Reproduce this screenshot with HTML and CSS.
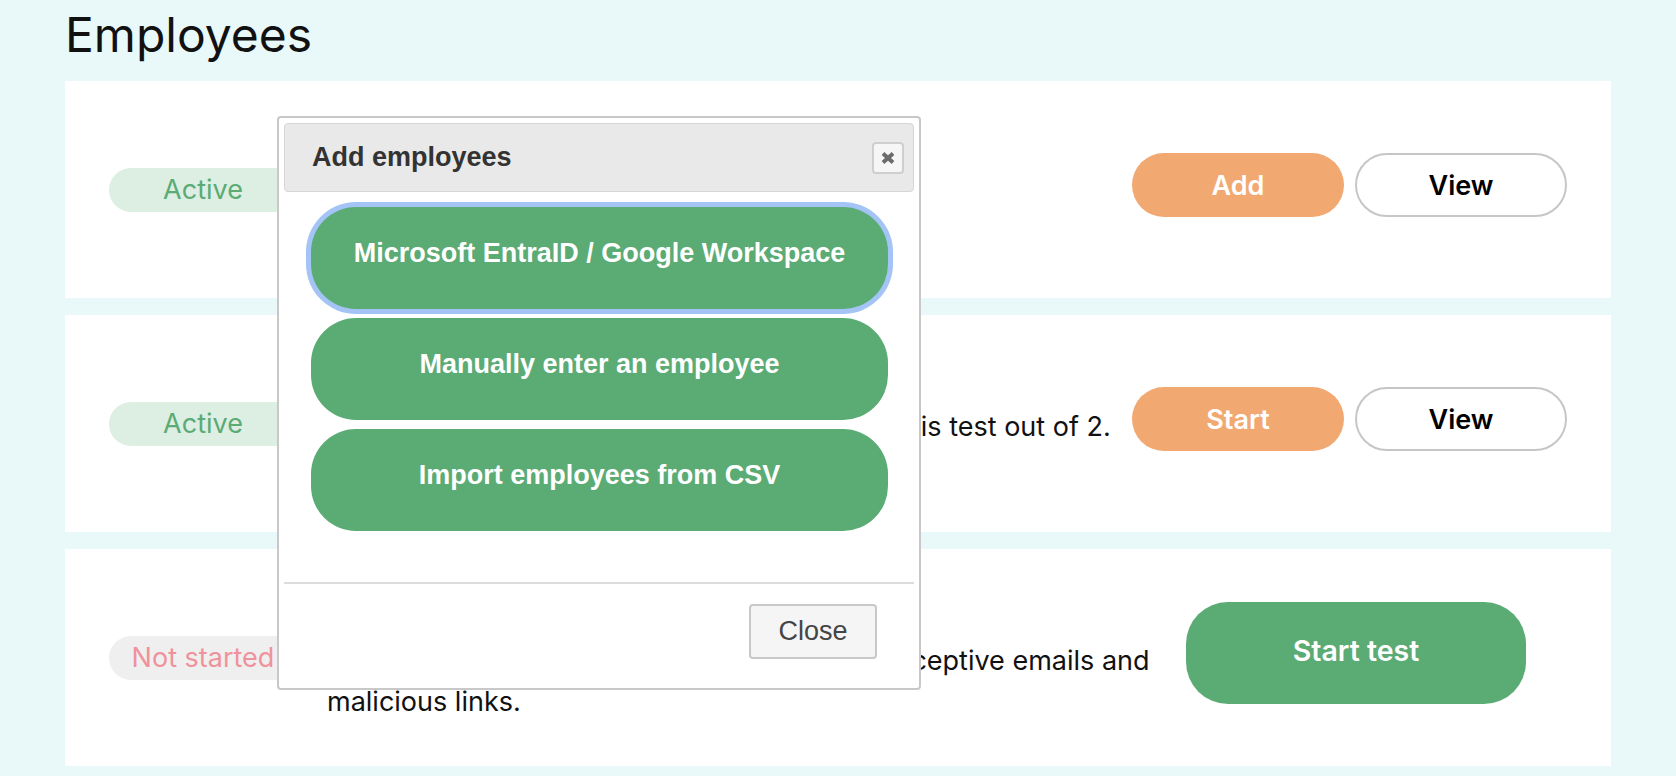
FILE: index.html
```html
<!DOCTYPE html>
<html lang="en">
<head>
  <meta charset="UTF-8" />
  <meta name="viewport" content="width=device-width, initial-scale=1.0"/>
  <title>Employees</title>
  <link rel="stylesheet" href="styles.css">
</head>
<body>
  <div class="page">
    <h1>Employees</h1>

    <div class="panel">
      <span class="badge badge-active">Active</span>
      <div class="panel-body">
        <div class="panel-title">Employees</div>
        <p>2 employees in your team.</p>
      </div>
      <div class="actions">
        <button class="btn btn-orange">Add</button>
        <button class="btn btn-outline">View</button>
      </div>
    </div>

    <div class="panel">
      <span class="badge badge-active">Active</span>
      <div class="panel-body">
        <div class="panel-title">Security training</div>
        <p>To date, 1 of your employees has completed this test out of 2. Results update daily.</p>
      </div>
      <div class="actions">
        <button class="btn btn-orange">Start</button>
        <button class="btn btn-outline">View</button>
      </div>
    </div>

    <div class="panel">
      <span class="badge badge-waiting">Not started</span>
      <div class="panel-body">
        <div class="panel-title">Phishing test</div>
        <p>Check how well your employees can catch deceptive emails and malicious links.</p>
      </div>
      <div class="actions actions-single">
        <button class="btn-big">Start test</button>
      </div>
    </div>

    <!-- Add employees dialog -->
    <div class="dialog">
      <div class="dialog-header">
        <span>Add employees</span>
        <button class="dialog-x" title="Close">
          <svg width="16" height="14" viewBox="0 0 16 14">
            <path d="M3 2.5 L13 11.5 M13 2.5 L3 11.5" stroke="#6b6b6b" stroke-width="4"/>
          </svg>
        </button>
      </div>
      <div class="dialog-body">
        <button class="dialog-option focused">Microsoft EntraID / Google Workspace</button>
        <button class="dialog-option">Manually enter an employee</button>
        <button class="dialog-option">Import employees from CSV</button>
      </div>
      <div class="dialog-footer">
        <button class="dialog-close">Close</button>
      </div>
    </div>
  </div>
</body>
</html>
```

FILE: styles.css
```css
body {
  margin: 0;
  font-family: Inter, "Liberation Sans", sans-serif;
  background-color: #e9f8f9;
  color: #111;
}

.page {
  position: relative;
  padding: 6px 65px 0;
}

h1 {
  margin: 0 0 17px;
  font-size: 48px;
  font-weight: 400;
  line-height: 58px;
}

.panel {
  display: flex;
  align-items: center;
  height: 217px;
  padding: 0 44px;
  margin-bottom: 17px;
  background-color: white;
}

.badge {
  flex: 0 0 188px;
  height: 44px;
  line-height: 44px;
  border-radius: 22px;
  text-align: center;
  font-size: 27px;
}

.badge-active {
  background-color: #ddeee3;
  color: #5aab74;
}

.badge-waiting {
  background-color: #efefef;
  color: #f0929b;
}

.panel-body {
  flex: 1;
  padding: 0 20px 0 30px;
}

.panel-title {
  font-size: 30px;
  font-weight: 600;
  line-height: 40px;
  margin-bottom: 8px;
}

.panel-body p {
  margin: 0;
  font-size: 27px;
  line-height: 40.5px;
}

.actions {
  display: flex;
  gap: 11px;
  margin-bottom: 9px;
}

.actions-single {
  padding: 0 41px 0 10px;
}

.btn {
  width: 212px;
  height: 64px;
  border-radius: 32px;
  font-family: Inter, sans-serif;
  font-size: 27px;
  font-weight: 600;
  cursor: pointer;
}

.btn-orange {
  background-color: #f2a871;
  color: white;
  border: none;
}

.btn-outline {
  background-color: white;
  color: #000;
  border: 2px solid #c6c6c6;
}

.btn-big {
  width: 340px;
  height: 102px;
  padding-bottom: 6px;
  border: none;
  border-radius: 42px;
  background-color: #5bab75;
  color: white;
  font-family: Inter, sans-serif;
  font-size: 28.5px;
  font-weight: 600;
  cursor: pointer;
}

/* dialog on top of the list */
.dialog {
  position: absolute;
  left: 277px;
  top: 116px;
  width: 644px;
  box-sizing: border-box;
  padding: 5px;
  background-color: white;
  border: 2px solid #c8c8c8;
  border-radius: 4px;
  font-family: "Liberation Sans", Arial, sans-serif;
}

.dialog-header {
  display: flex;
  align-items: center;
  justify-content: space-between;
  height: 69px;
  box-sizing: border-box;
  padding: 0 9px 0 27px;
  background-color: #e9e9e9;
  border: 1px solid #d6d6d6;
  border-radius: 4px;
  font-size: 27px;
  font-weight: bold;
  color: #333;
}

.dialog-x {
  width: 32px;
  height: 32px;
  padding: 0;
  display: flex;
  align-items: center;
  justify-content: center;
  background-color: #f6f6f6;
  border: 2px solid #cfcfcf;
  border-radius: 4px;
}

.dialog-body {
  display: flex;
  flex-direction: column;
  gap: 9px;
  padding: 15px 26px 51px 27px;
}

.dialog-option {
  height: 102px;
  padding: 0 0 10px;
  border: none;
  border-radius: 45px;
  background-color: #5bab75;
  color: white;
  font-family: "Liberation Sans", Arial, sans-serif;
  font-size: 27px;
  font-weight: bold;
  cursor: pointer;
}

.dialog-option.focused {
  box-shadow: 0 0 0 5px #a3c4f5;
}

.dialog-footer {
  display: flex;
  justify-content: flex-end;
  padding: 20px 37px 24px 0;
  border-top: 2px solid #dcdcdc;
}

.dialog-close {
  width: 128px;
  height: 55px;
  background-color: #f5f5f5;
  border: 2px solid #c8c8c8;
  border-radius: 4px;
  color: #454545;
  font-family: "Liberation Sans", Arial, sans-serif;
  font-size: 27px;
}
```
